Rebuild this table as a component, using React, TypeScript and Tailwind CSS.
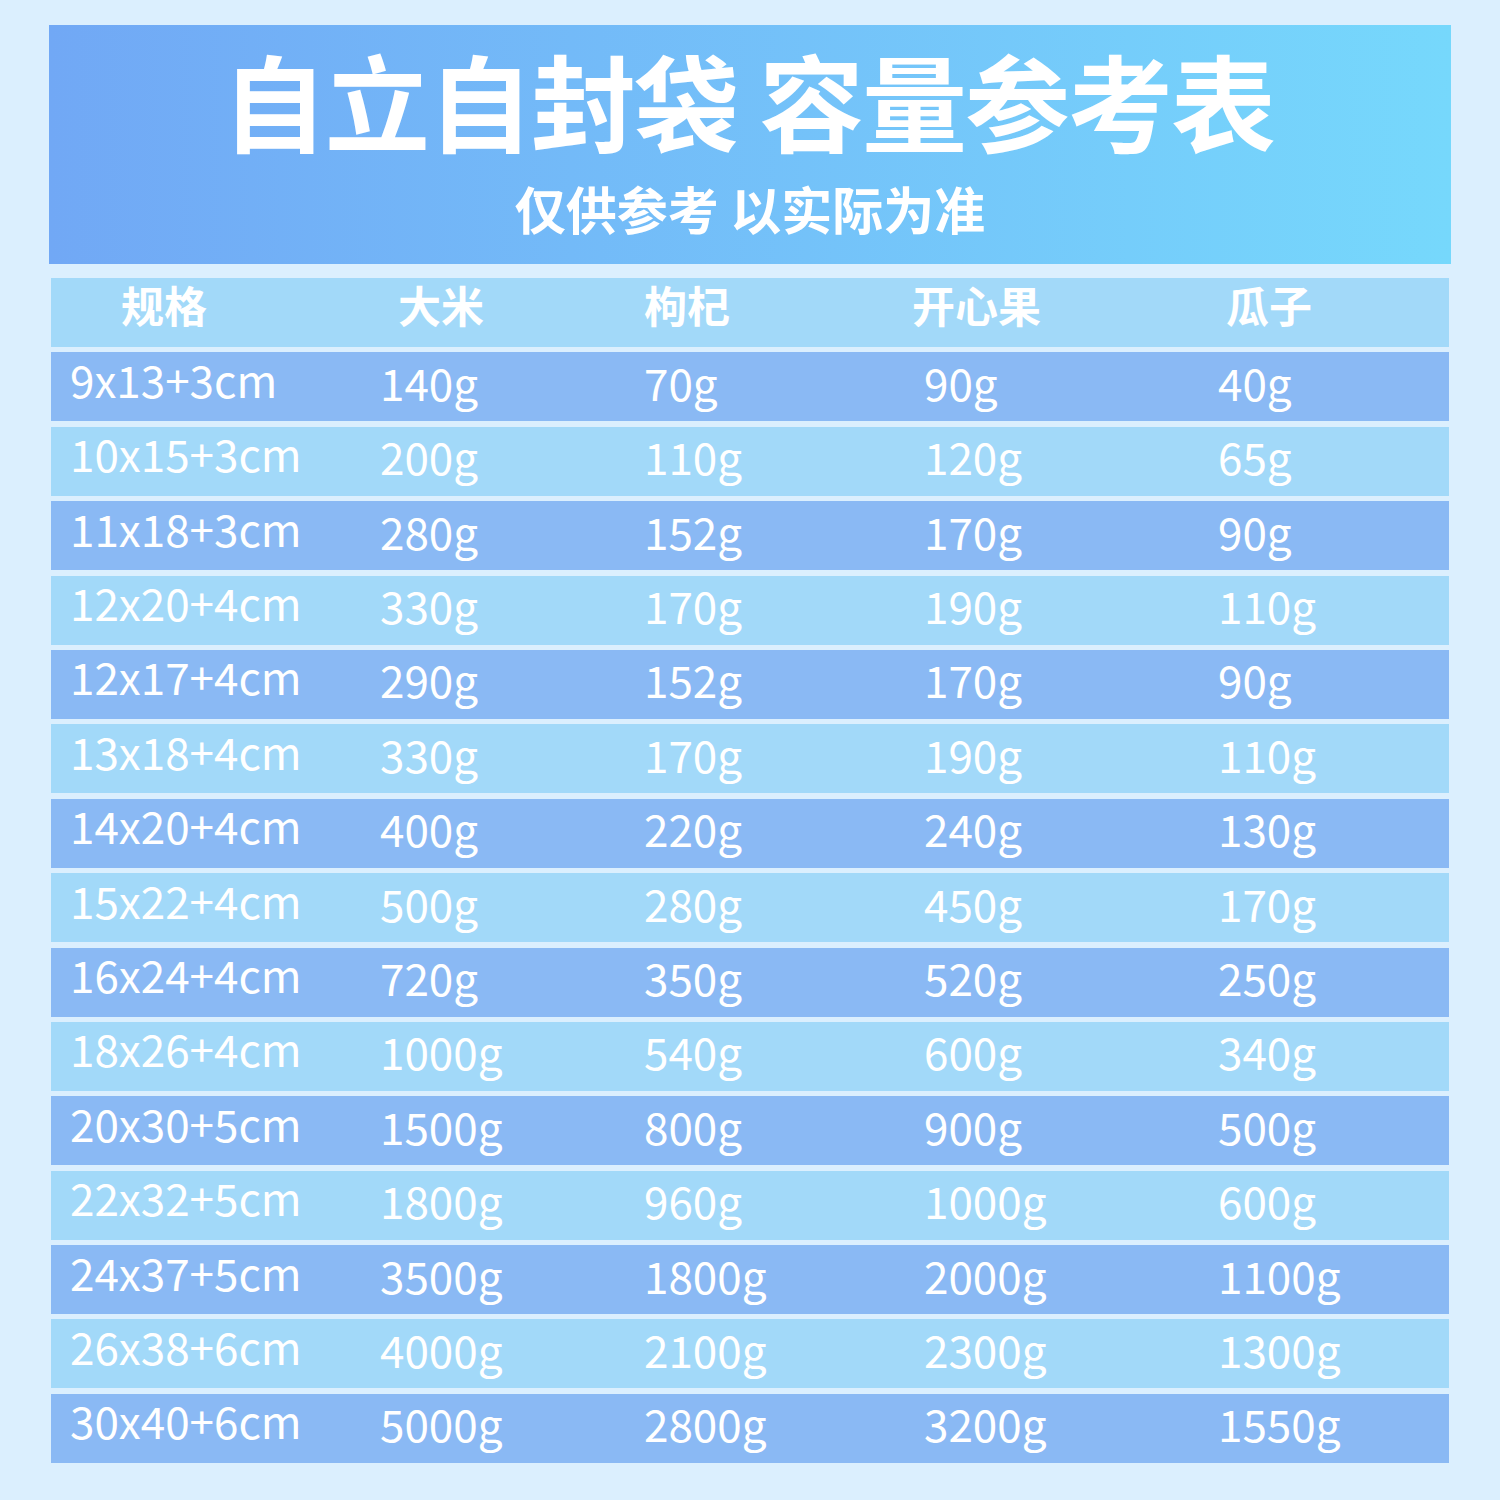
import React from "react";

const rows: string[][] = [
  ["9x13+3cm", "140g", "70g", "90g", "40g"],
  ["10x15+3cm", "200g", "110g", "120g", "65g"],
  ["11x18+3cm", "280g", "152g", "170g", "90g"],
  ["12x20+4cm", "330g", "170g", "190g", "110g"],
  ["12x17+4cm", "290g", "152g", "170g", "90g"],
  ["13x18+4cm", "330g", "170g", "190g", "110g"],
  ["14x20+4cm", "400g", "220g", "240g", "130g"],
  ["15x22+4cm", "500g", "280g", "450g", "170g"],
  ["16x24+4cm", "720g", "350g", "520g", "250g"],
  ["18x26+4cm", "1000g", "540g", "600g", "340g"],
  ["20x30+5cm", "1500g", "800g", "900g", "500g"],
  ["22x32+5cm", "1800g", "960g", "1000g", "600g"],
  ["24x37+5cm", "3500g", "1800g", "2000g", "1100g"],
  ["26x38+6cm", "4000g", "2100g", "2300g", "1300g"],
  ["30x40+6cm", "5000g", "2800g", "3200g", "1550g"],
];

const font = { fontFamily: '"Noto Sans CJK SC", "Noto Sans", sans-serif' };

export default function App() {
  return (
    <div
      className="w-[1500px] h-[1500px] bg-[#dbeffe] pt-[25px] px-[49px] text-white"
      style={font}
    >
      <div className="h-[239px] bg-gradient-to-r from-[#71a8f5] to-[#76d8fc] flex flex-col items-center">
        <div className="mt-[21px] text-[105px] leading-none font-bold tracking-[-2px] pr-[4px]">
          自立自封袋 容量参考表
        </div>
        <div className="mt-[32px] text-[51px] leading-none font-bold">
          仅供参考 以实际为准
        </div>
      </div>
      <div className="mt-[14px] flex flex-col gap-[5.4px] px-[2px]">
        <div className="h-[69px] bg-[#a2d9f9] grid grid-cols-[277px_246px_268px_314px_1fr] pl-[70px] items-center text-[43px] font-bold leading-none pb-[16px]">
          <div>规格</div>
          <div>大米</div>
          <div>枸杞</div>
          <div>开心果</div>
          <div>瓜子</div>
        </div>
        {rows.map((r, i) => (
          <div
            key={i}
            className={`h-[69px] ${i % 2 === 0 ? "bg-[#8ab9f4]" : "bg-[#a2d9f9]"} grid grid-cols-[310px_264px_280px_294px_1fr] pl-[19px] items-center text-[44px] leading-none pb-[10px]`}
          >
            <div className="-mt-[6px]">{r[0]}</div>
            <div>{r[1]}</div>
            <div>{r[2]}</div>
            <div>{r[3]}</div>
            <div>{r[4]}</div>
          </div>
        ))}
      </div>
    </div>
  );
}
